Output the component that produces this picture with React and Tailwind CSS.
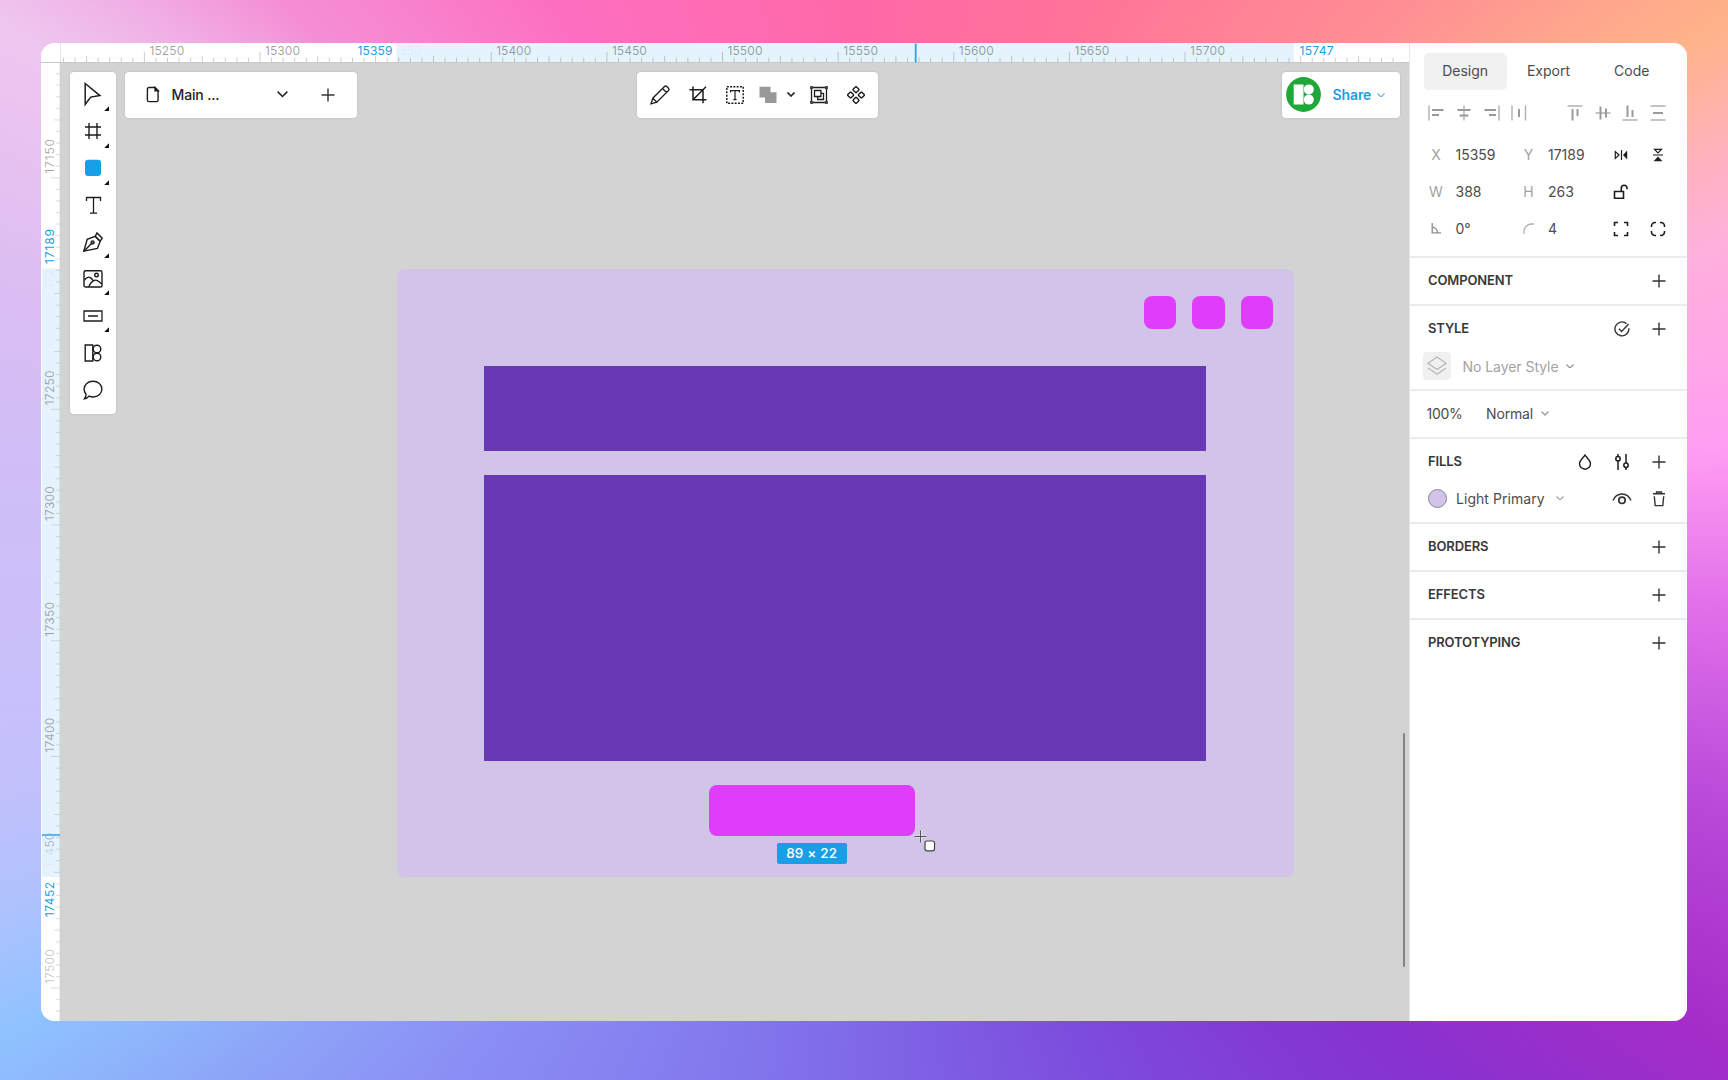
import React from "react";

const BACKDROP =
  "conic-gradient(from 0deg at 864px 540px, #ff69a7 0deg, #ff7398 22.6deg, #ff8f94 46deg, #ffb389 59deg, #ffb2c0 66deg, #ffb0dc 71deg, #ff9df2 84deg, #e272ea 94deg, #ba4ad9 107deg, #a52dc8 120deg, #8632cf 133.6deg, #7c4bdc 155deg, #8070ea 187deg, #8b90f5 219deg, #8da5f7 230deg, #8fc2ff 240deg, #b0c2fd 247deg, #c2c0fb 254deg, #ccbff9 266deg, #d0bef6 276deg, #dabdf2 286deg, #ecc4f0 298deg, #eec6ef 301deg, #f0b0e5 306deg, #f58ed5 312.6deg, #fd6fc0 330deg, #ff69a8 358deg, #ff69a7 360deg)";

const UNIT = 2.3125;

function Svg({ w = 20, h = w, sw = 1.4, className = "text-[#1d1d1d]", children }) {
  return (
    <svg
      width={w}
      height={h}
      viewBox={`0 0 ${w} ${h}`}
      fill="none"
      stroke="currentColor"
      strokeWidth={sw}
      className={`block shrink-0 ${className}`}
    >
      {children}
    </svg>
  );
}

const Plus = () => (
  <Svg w={14} sw={1.4} className="text-[#333]">
    <path d="M7 .5v13M.5 7h13" />
  </Svg>
);

const Chevron = ({ w = 10, sw = 1.4, className }) => (
  <svg width={w} height={w * 0.6} viewBox="0 0 10 6" fill="none" stroke="currentColor" strokeWidth={sw} className={`block shrink-0 ${className}`}>
    <path d="M.6 .6 5 5 9.4 .6" />
  </svg>
);

/* ---------- rulers ---------- */

function ticks(first, last, origin, at) {
  const out = [];
  for (let u = first; u <= last; u += 5) out.push({ u, p: at + (u - origin) * UNIT });
  return out;
}

function TopRuler() {
  const labels = [15250, 15300, 15400, 15450, 15500, 15550, 15600, 15650, 15700];
  return (
    <svg width="1368" height="20" viewBox="41 43 1368 20" className="block shrink-0 bg-white">
      <rect x="396.5" y="43" width="897.5" height="20" fill="#e5f4fc" />
      {ticks(15215, 15790, 15500, 722.5).map(({ u, p }) => (
        <path
          key={u}
          d={`M${p} 62V${labels.includes(u) ? 52 : u % 25 === 0 ? 56 : 57.5}`}
          stroke="#000"
          strokeOpacity=".2"
        />
      ))}
      <path d="M60.5 43V63" stroke="#e6e6e6" />
      <path d="M41 62.5H1409" stroke="#c9c9c9" />
      <g fontFamily="Inter, sans-serif" fontSize="12" fill="#000" fillOpacity=".38">
        {labels.map((u) => (
          <text key={u} x={722.5 + (u - 15500) * UNIT + 5} y="55" textLength="35" lengthAdjust="spacing">
            {u}
          </text>
        ))}
        <text x="399" y="55" fillOpacity=".05">350</text>
        <text x="357.5" y="55" textLength="35" fill="#1a9ee5" fillOpacity="1">15359</text>
        <text x="1299.5" y="55" textLength="34" fill="#1a9ee5" fillOpacity="1">15747</text>
      </g>
      <path d="M915.7 43.5V62.5" stroke="#2ea3e3" strokeWidth="1.8" />
    </svg>
  );
}

function SideRuler() {
  const labels = [17150, 17250, 17300, 17350, 17400, 17500];
  const y = (u) => 177.8 + (u - 17150) * 2.315;
  const list = [];
  for (let u = 17105; u <= 17510; u += 5) list.push(u);
  return (
    <svg width="19" height="958" viewBox="41 63 19 958" className="block shrink-0 bg-white">
      <rect x="42" y="268.5" width="18" height="608.5" fill="#e5f4fc" />
      {list.map((u) => (
        <path
          key={u}
          d={`M60 ${y(u)}H${labels.includes(u) ? 50.5 : u % 25 === 0 ? 54 : 56}`}
          stroke="#000"
          strokeOpacity=".13"
        />
      ))}
      <g fontFamily="Inter, sans-serif" fontSize="12" fill="#000" fillOpacity=".36">
        {labels.map((u) => (
          <text key={u} transform={`translate(53.5 ${y(u) - 4}) rotate(-90)`} textLength="35" fillOpacity={u === 17500 ? 0.24 : 0.34}>
            {u}
          </text>
        ))}
        <text transform="translate(53.5 289) rotate(-90)" fillOpacity=".05">172</text>
        <text transform="translate(53.5 868) rotate(-90)" fillOpacity=".04">17</text>
        <text transform="translate(53.5 855.5) rotate(-90)" fillOpacity=".12">4</text>
        <text transform="translate(53.5 847.5) rotate(-90)" fillOpacity=".28">50</text>
        <text transform="translate(53.5 264) rotate(-90)" textLength="35" fill="#1a9ee5" fillOpacity="1">17189</text>
        <text transform="translate(53.5 917) rotate(-90)" textLength="35" fill="#1a9ee5" fillOpacity="1">17452</text>
      </g>
      <path d="M42 835H60" stroke="#5cb9e9" strokeWidth="1.8" />
      <path d="M59.5 63V1021" stroke="#000" strokeOpacity=".06" />
    </svg>
  );
}

/* ---------- canvas tools ---------- */

const TOOLS = [
  {
    more: true,
    icon: <path d="M2.2.5v21l5.500-7.400 9.200-1.500z" strokeWidth="1.500" transform="translate(0 -1)" />,
  },
  { more: true, icon: <path d="M6 2v16M14 2v16M2 6h16M2 14h16" /> },
  { more: true, icon: <rect x="2" y="1.800" width="16" height="16.200" rx="3" fill="#1a9ee5" stroke="none" /> },
  { icon: <path d="M3.500 6V2.500h14V6M10.500 2.500v15.600M7 18.100h7" strokeWidth="1.300" /> },
  {
    more: true,
    icon: (
      <g strokeWidth="1.400">
        <path d="m.8 19.200 3.400-11.800 8-3 5 4.800-2.800 7.200z" />
        <path d="m12.200 4.400 1.800-3.400 5.200 5.200-2 3zM.8 19.200l8-8" />
        <circle cx="9.600" cy="10.400" r="1.500" fill="#777" />
      </g>
    ),
  },
  {
    more: true,
    icon: (
      <g strokeWidth="1.400">
        <rect x="1" y="1.800" width="18" height="16.200" rx="1.600" />
        <circle cx="13.500" cy="6" r="1.800" />
        <path d="M1.200 11.300C3.500 8.600 5.600 7.500 7.200 8.600s2.800 2.500 3 3.200L7.800 14 5.600 18M7.800 14c2-2.400 4.200-3.400 6-2.600s3.500 2.200 5 3.600" />
      </g>
    ),
  },
  { more: true, icon: <path d="M1 5h18v10H1zM5 10h10" strokeWidth="1.300" /> },
  {
    icon: (
      <g strokeWidth="1.400">
        <path d="M2.200 2h7.600v16H2.200z" />
        <circle cx="14" cy="6" r="3.800" />
        <circle cx="14" cy="14" r="3.800" />
      </g>
    ),
  },
  {
    icon: (
      <path d="M10 1.300c5 0 8.900 3.300 8.900 7.800s-3.900 7.900-8.900 7.900c-1.600 0-2.800-.3-4-.8-1.200 1.600-2.800 2.500-4.500 2.600 1.200-1.400 1.700-2.800 1.500-4.600C1.700 12.700 1.100 11 1.100 9.100 1.100 4.600 5 1.300 10 1.300z" strokeWidth="1.400" />
    ),
  },
];

function ToolBar() {
  return (
    <div className="absolute left-[9.5px] top-[8.5px] flex h-[342.5px] w-[46px] flex-col items-center rounded bg-white pt-[4.5px] shadow-[0_0_2px_rgba(0,0,0,0.15)]">
      {TOOLS.map((t, i) => (
        <button key={i} className="relative flex h-[36.9px] w-full items-center justify-center">
          <Svg w={20} className="overflow-visible text-[#1d1d1d]">{t.icon}</Svg>
          {t.more && (
            <svg width="5" height="5" viewBox="0 0 5 5" className="absolute bottom-[2px] right-[7px]">
              <path d="M5 .2V5H.2z" fill="#111" />
            </svg>
          )}
        </button>
      ))}
    </div>
  );
}

function PageBar() {
  return (
    <div className="absolute left-[64.5px] top-[8.5px] flex h-[46px] w-[232px] items-center rounded bg-white pl-[21px] shadow-[0_0_2px_rgba(0,0,0,0.15)]">
      <Svg w={14} h={17} sw={1.4}>
        <path d="M9 1.5H3A1.600 1.600 0 0 0 1.400 3.100v10.900a1.600 1.600 0 0 0 1.600 1.600h7.500a1.600 1.600 0 0 0 1.600-1.600V4.700z" />
        <path d="M9 1.5v3.200h3.200z" fill="currentColor" />
      </Svg>
      <span className="ml-[12px] w-[105px] whitespace-nowrap text-[14px] font-medium tracking-[-0.15px] text-[#222]">Main ...</span>
      <Chevron w={11} sw={1.4} className="text-[#222]" />
      <span className="ml-[33.5px] text-[#222]">
        <Plus />
      </span>
    </div>
  );
}

function ActionBar() {
  return (
    <div className="absolute left-[577px] top-[8.5px] flex h-[46px] w-[241px] items-center rounded bg-white pl-[13px] shadow-[0_0_2px_rgba(0,0,0,0.15)]">
      <Svg w={20} sw={1.3}>
        <path d="m1 18.800 1.800-5.600L14.500 1.500a1.600 1.600 0 0 1 2.300 0l1.700 1.700a1.600 1.600 0 0 1 0 2.300L6.800 17.200zM2.800 13.200l4 4M12.500 3.500l4 4" />
      </Svg>
      <div className="ml-[18px]">
        <Svg w={20} sw={1.5}>
          <path d="M5 1.500V14.800h13.500M1.500 4.800H15v13.500M18 1.800 5 14.800" />
        </Svg>
      </div>
      <div className="ml-[17.5px]">
        <Svg w={18} sw={1.3}>
          <rect x=".8" y=".8" width="16.4" height="16.4" strokeDasharray="2 1.28" strokeWidth="1.5" />
          <path d="M4.600 6.500V4.700h8.800v1.800M9 4.700v9M7.400 13.700h3.200" strokeWidth="1.2" />
        </Svg>
      </div>
      <div className="ml-[15px]">
        <svg width="18" height="18" viewBox="0 0 18 18" className="block">
          <path d="M.500 .800h11v5.400h6v10.800H6v-5.500H.500z" fill="#999" />
        </svg>
      </div>
      <Chevron w={8} sw={2} className="ml-[10px] text-[#222]" />
      <div className="ml-[14px]">
        <Svg w={20} sw={1.3}>
          <path d="M2.500 2.500h15v15h-15z" />
          <g fill="#444" stroke="none">
            <rect x="1" y="1" width="3.200" height="3.200" rx="1" />
            <rect x="15.800" y="1" width="3.200" height="3.200" rx="1" />
            <rect x="1" y="15.800" width="3.200" height="3.200" rx="1" />
            <rect x="15.800" y="15.800" width="3.200" height="3.200" rx="1" />
          </g>
          <path d="M5.500 5.500h6.400v6H5.500zM11.900 8.300h2.600v6.200H8.600v-3" />
        </Svg>
      </div>
      <div className="ml-[17px]">
        <Svg w={20} sw={1.4}>
          <rect x="7.700" y="2.300" width="4.600" height="4.600" rx=".6" transform="rotate(45 10 4.600)" />
          <rect x="7.700" y="13.100" width="4.600" height="4.600" rx=".6" transform="rotate(45 10 15.400)" />
          <rect x="2.300" y="7.700" width="4.600" height="4.600" rx=".6" transform="rotate(45 4.600 10)" />
          <rect x="13.100" y="7.700" width="4.600" height="4.600" rx=".6" transform="rotate(45 15.400 10)" />
        </Svg>
      </div>
    </div>
  );
}

function ShareBar() {
  return (
    <div className="absolute right-[9.5px] top-[8.5px] flex h-[46px] w-[118px] items-center rounded bg-white pl-[4.5px] shadow-[0_0_2px_rgba(0,0,0,0.15)]">
      <svg width="35" height="35" viewBox="0 0 35 35" className="block">
        <circle cx="17.500" cy="17.500" r="17.400" fill="#1fa838" />
        <path d="M7.700 7.500h9.800v20H7.700z" fill="#fff" />
        <circle cx="22.800" cy="12.400" r="5" fill="#fff" />
        <circle cx="22.800" cy="22.600" r="5" fill="#fff" />
      </svg>
      <span className="ml-[11.5px] w-[39px] text-[14px] font-semibold tracking-[-0.1px] text-[#1a9ee5]">Share</span>
      <Chevron w={8} sw={1.5} className="ml-[5px] mt-px text-[#5fb9ec]" />
    </div>
  );
}

function Canvas() {
  return (
    <main className="relative flex-1 overflow-hidden bg-[#d3d3d3]">
      <div className="absolute left-[336.5px] top-[205.5px] h-[608.5px] w-[897.5px] rounded-lg bg-[#d1c4e8]">
        <div className="absolute right-[21px] top-[27.5px] flex gap-[16px]">
          <i className="size-[32.5px] rounded-lg bg-[#e03dfb]" />
          <i className="size-[32.5px] rounded-lg bg-[#e03dfb]" />
          <i className="size-[32.5px] rounded-lg bg-[#e03dfb]" />
        </div>
        <div className="absolute left-[87.4px] top-[97.5px] flex w-[722px] flex-col gap-[24px]">
          <div className="h-[85px] bg-[#6938b5]" />
          <div className="h-[286px] bg-[#6938b5]" />
        </div>
        <div className="absolute left-[312.5px] top-[516px] h-[51px] w-[206px] rounded-lg bg-[#e03dfb]" />
        <div className="absolute left-[380.5px] top-[574px] flex h-[21px] w-[69.5px] items-center justify-center rounded-[2px] bg-[#1a9ee5] text-[13.5px] font-medium tracking-[0.2px] text-white">
          89 × 22
        </div>
      </div>
      <svg width="22" height="22" viewBox="0 0 22 22" className="absolute left-[854px] top-[767px]">
        <path d="M7 .5v12M.500 6.500h12" stroke="#fff" strokeWidth="2.600" strokeOpacity=".4" />
        <path d="M6.500 .5v12M.500 6.500h12" stroke="#555" />
        <rect x="11" y="11" width="9.500" height="9.800" rx="2" fill="#fff" stroke="#444" strokeWidth="1.200" />
      </svg>
      <div className="absolute right-[4px] top-[669.5px] h-[234px] w-[2px] rounded bg-[#858585]" />
      <ToolBar />
      <PageBar />
      <ActionBar />
      <ShareBar />
    </main>
  );
}

/* ---------- inspector ---------- */

const ALIGN = [
  ["M1 .5v15", "M4 5h11.5M4 10h7"],
  ["M8 .5v15", "M1.5 5h13M3.5 10.500h9"],
  ["M15 .5v15", "M.5 5H12M5 10h7"],
  ["M1 .5v15M14.5 .5v15", "M8 4v8"],
  ["M.5 1h15", "M5.5 4v11.500M10.500 4v7"],
  ["M.5 8h15", "M5.5 1.500v13M11 3.500v9"],
  ["M.5 15h15", "M5.5 .5V12M10.500 5v7"],
  ["M.5 1h15M.5 15h15", "M3 8h10"],
];

function AlignIcon({ i }) {
  return (
    <span className="flex w-[27.7px] justify-center">
      <svg width="16" height="16" viewBox="0 0 16 16" fill="none" className="block">
        <path d={ALIGN[i][0]} stroke="#b0b0b0" strokeWidth="1.4" />
        <path d={ALIGN[i][1]} stroke="#9a9a9a" strokeWidth="2" />
      </svg>
    </span>
  );
}

function Cell({ children }) {
  return <span className="flex w-[37px] shrink-0 items-center justify-center">{children}</span>;
}

function PropRow({ a, av, b, bv, children }) {
  return (
    <div className="grid h-[37px] grid-cols-[26px_66px_27px_60.5px_37px_37px] items-center pl-[13px] text-[14px] text-[#4c4c4c]">
      <span className="flex justify-center text-[#a3a3a3]">{a}</span>
      <span className="pl-[6.5px]">{av}</span>
      <span className="flex justify-center text-[#a3a3a3]">{b}</span>
      <span className="pl-[6px]">{bv}</span>
      {children}
    </div>
  );
}

function Section({ title, icons, children, last }) {
  return (
    <section className={last ? "" : "border-b-2 border-[#ececec]"}>
      <div className="flex h-[46px] items-center pl-[18px] pr-[10px]">
        <h2 className="flex-1 text-[13px] font-semibold tracking-[-0.13px] text-[#383838]">{title}</h2>
        {icons}
        <Cell>
          <Plus />
        </Cell>
      </div>
      {children}
    </section>
  );
}

function Inspector() {
  return (
    <aside className="w-[278px] shrink-0 border-l border-[#e6e6e6] bg-white">
      <div className="h-[215px] border-b-2 border-[#ececec]">
        <nav className="flex pl-[13.5px] pt-[10px] text-[14px] text-[#4c4c4c]">
          <button className="h-[37px] w-[83.3px] rounded-[5px] bg-[#f1f1f1] pb-[2px]">Design</button>
          <button className="h-[37px] w-[83.3px] pb-[2px]">Export</button>
          <button className="h-[37px] w-[83.3px] pb-[2px]">Code</button>
        </nav>
        <div className="flex h-[46px] items-center pl-[12.5px]">
          <AlignIcon i={0} />
          <AlignIcon i={1} />
          <AlignIcon i={2} />
          <AlignIcon i={3} />
          <span className="w-[28px]" />
          <AlignIcon i={4} />
          <AlignIcon i={5} />
          <AlignIcon i={6} />
          <AlignIcon i={7} />
        </div>
        <PropRow a="X" av="15359" b="Y" bv="17189">
          <Cell>
            <Svg w={14} sw={1.2}>
              <path d="M1.300 3.500v7l3.800-3.500zM7.500 2v10" />
              <path d="M13.200 2.600v8.800L9 7z" fill="currentColor" stroke="none" />
            </Svg>
          </Cell>
          <Cell>
            <Svg w={14} sw={1.2}>
              <path d="M3.500 1.300h7L7 5zM2 7h10" />
              <path d="M2.600 13.200h8.800L7 8.500z" fill="currentColor" stroke="none" />
            </Svg>
          </Cell>
        </PropRow>
        <PropRow a="W" av="388" b="H" bv="263">
          <Cell>
            <Svg w={16} sw={1.6}>
              <path d="M1.500 7.500h9v6.700h-9zM8.300 7.300V4.200c0-1.700 1.100-2.900 2.800-2.900s2.900 1.200 2.900 3v.9" />
            </Svg>
          </Cell>
        </PropRow>
        <PropRow
          a={
            <Svg w={10} h={11} sw={1.3} className="text-[#8d8d8d]">
              <path d="M1.200 0v9.800H10M1.200 4.200a5.500 5.500 0 0 1 5.300 5.500" />
            </Svg>
          }
          av="0°"
          b={
            <Svg w={11} sw={1.3} className="text-[#b0b0b0]">
              <path d="M1 11V9c0-4.700 3.300-8 8-8h2" />
            </Svg>
          }
          bv="4"
        >
          <Cell>
            <Svg w={16} sw={1.6}>
              <path d="M1.500 5V1.500H5M11 1.500h3.500V5M14.500 11v3.500H11M5 14.500H1.500V11" />
            </Svg>
          </Cell>
          <Cell>
            <Svg w={16} sw={1.6}>
              <path d="M1.500 6V5a3.500 3.500 0 0 1 3.500-3.500h1M10 1.500h1A3.500 3.500 0 0 1 14.500 5v1M14.500 10v1a3.500 3.500 0 0 1-3.500 3.500h-1M6 14.500H5A3.500 3.500 0 0 1 1.500 11v-1" />
            </Svg>
          </Cell>
        </PropRow>
      </div>

      <Section title="COMPONENT" />

      <Section
        title="STYLE"
        icons={
          <Cell>
            <Svg w={16} sw={1.4} className="text-[#333]">
              <path d="M12.500 2.600A7 7 0 1 0 14.900 7.200M5 7.700l2.600 2.700 7-7.400" />
            </Svg>
          </Cell>
        }
      >
        <div className="flex h-[37px] items-start pl-[13px]">
          <span className="flex size-[28px] items-center justify-center rounded bg-[#f0f0f0]">
            <Svg w={20} sw={1.3} className="text-[#b8b8b8]">
              <path d="m10 1 9 6.300-9 6.200-9-6.200zM1 12l9 6.300 9-6.300" />
            </Svg>
          </span>
          <span className="flex h-[28px] items-center whitespace-nowrap text-[14px] text-[#a3a3a3]">
            <span className="ml-[11.5px] w-[96px] tracking-[-0.05px]">No Layer Style</span>
            <Chevron w={8} sw={1.7} className="ml-[7px] text-[#999]" />
          </span>
        </div>
      </Section>

      <section className="flex h-[47.5px] items-center border-b-2 border-[#ececec] pl-[16.5px] text-[14px] text-[#4c4c4c]">
        <span className="w-[59.500px] tracking-[-0.3px]">100%</span>
        <span className="w-[47px] tracking-[-0.15px]">Normal</span>
        <Chevron w={8} sw={1.6} className="ml-[8px] text-[#999]" />
      </section>

      <Section
        title="FILLS"
        icons={
          <>
            <Cell>
              <Svg w={14} h={16} sw={1.4}>
                <path d="M7 1C5.500 3.600 1.500 6.500 1.500 9.700a5.500 5.500 0 0 0 11 0C12.500 6.500 8.500 3.600 7 1z" />
              </Svg>
            </Cell>
            <Cell>
              <Svg w={16} h={18} sw={1.5}>
                <path d="M4 1v2.500M4 8v9M12 1v9M12 14.500V17" />
                <circle cx="4" cy="5.700" r="2.200" />
                <circle cx="12" cy="12.200" r="2.200" />
              </Svg>
            </Cell>
          </>
        }
      >
        <div className="flex h-[37px] items-start pl-[18px] pr-[10px]">
          <div className="flex h-[28px] w-full items-center whitespace-nowrap text-[14px] text-[#4c4c4c]">
            <span className="size-[19px] rounded-full border-[1.5px] border-[#8d8399] bg-[#d1c4e8]" />
            <span className="ml-[9px] w-[88px] tracking-[0.05px]">Light Primary</span>
            <Chevron w={8} sw={1.5} className="ml-[11.5px] text-[#aaa]" />
            <span className="flex-1" />
            <Cell>
              <Svg w={20} h={14} sw={1.4} className="text-[#333]">
                <path d="M1 8.500C2.700 4.400 6 2 10 2s7.300 2.400 9 6.500" />
                <circle cx="10" cy="8.300" r="3.200" strokeWidth="1.700" />
              </Svg>
            </Cell>
            <Cell>
              <Svg w={14} h={16} sw={1.4} className="text-[#333]">
                <path d="M1 2.800h12M4.500 2.500V1h5v1.500M2.300 5.300 3.200 14.600h7.600l.9-9.300" />
              </Svg>
            </Cell>
          </div>
        </div>
      </Section>

      <Section title="BORDERS" />
      <Section title="EFFECTS" />
      <Section title="PROTOTYPING" last />
    </aside>
  );
}

export default function App() {
  return (
    <div
      className="h-[1080px] w-[1728px] overflow-hidden pl-[41px] pt-[43px] font-['Inter',sans-serif]"
      style={{ backgroundImage: BACKDROP }}
    >
      <div className="flex h-[978px] w-[1646px] overflow-hidden rounded-[14px] bg-white">
        <div className="flex w-[1368px] flex-col">
          <TopRuler />
          <div className="flex min-h-0 flex-1">
            <SideRuler />
            <Canvas />
          </div>
        </div>
        <Inspector />
      </div>
    </div>
  );
}
